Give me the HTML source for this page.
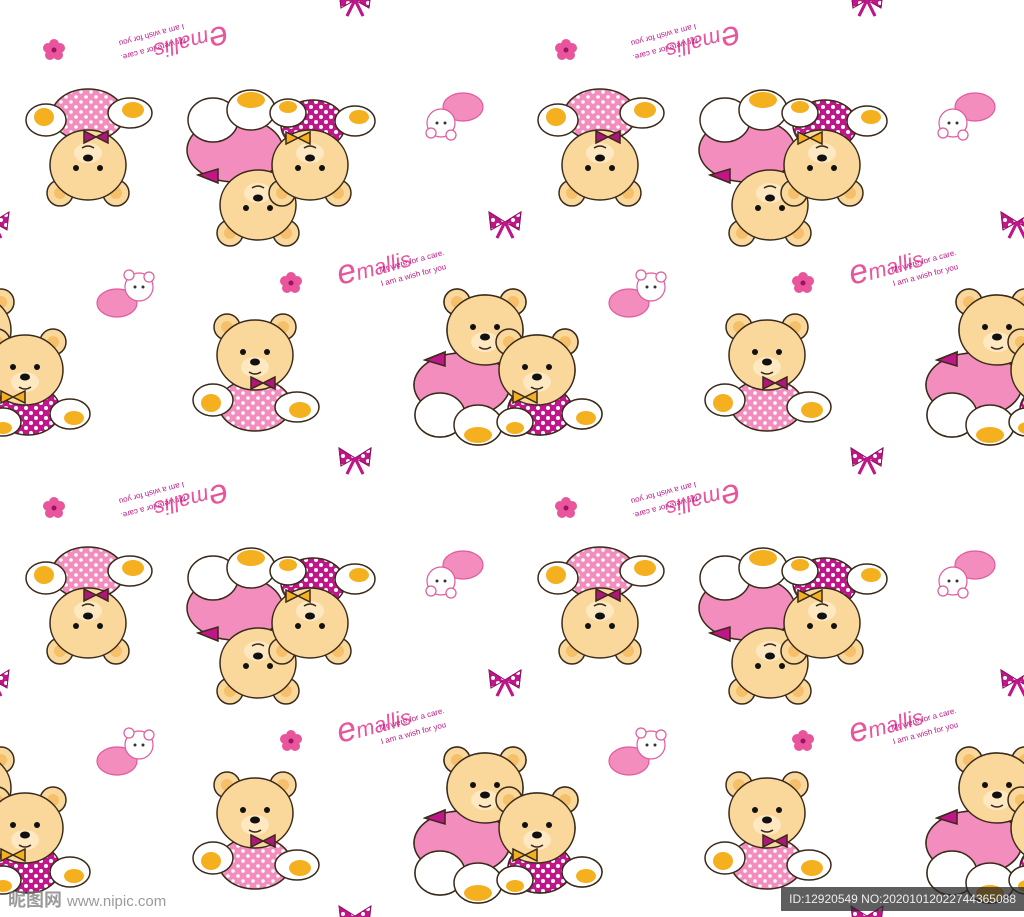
<!DOCTYPE html>
<html><head><meta charset="utf-8"><style>
html,body{margin:0;padding:0;background:#fff;width:1024px;height:917px;overflow:hidden;position:relative}
svg{position:absolute;left:0;top:0;overflow:hidden}
.wm{position:absolute;font-family:"Liberation Sans","Noto Sans CJK SC",sans-serif}
</style></head><body>
<svg width="1024" height="917" viewBox="0 0 1024 917" xmlns="http://www.w3.org/2000/svg">
<defs>
<pattern id="dots" width="10" height="10" patternUnits="userSpaceOnUse"><rect width="10" height="10" fill="#c0168a"/><circle cx="3" cy="3" r="2" fill="#fff"/><circle cx="8" cy="8" r="2" fill="#fff"/></pattern>
<pattern id="pdots" width="10" height="10" patternUnits="userSpaceOnUse"><rect width="10" height="10" fill="#f28dbe"/><circle cx="3" cy="3" r="1.8" fill="#fff"/><circle cx="8" cy="8" r="1.8" fill="#fff"/></pattern>
<g id="head" stroke="#3a2a1a" stroke-width="1.5">
 <circle cx="-28" cy="-28" r="13" fill="#fad89c"/><circle cx="28" cy="-28" r="13" fill="#fad89c"/>
 <circle cx="-28" cy="-28" r="6" fill="#f6c06a" stroke="none"/><circle cx="28" cy="-28" r="6" fill="#f6c06a" stroke="none"/>
 <ellipse cx="0" cy="0" rx="38" ry="35" fill="#fad89c"/>
 <ellipse cx="0" cy="12" rx="14" ry="10" fill="#fde8c2" stroke="none"/>
 <circle cx="-12" cy="-3" r="3" fill="#111" stroke="none"/><circle cx="12" cy="-3" r="3" fill="#111" stroke="none"/>
 <ellipse cx="0" cy="7" rx="5" ry="3.5" fill="#111" stroke="none"/>
 <path d="M-6 17 Q0 21 6 17" fill="none"/>
</g>
<g id="sb" stroke="#3a2a1a" stroke-width="1.5">
 <ellipse cx="0" cy="50" rx="36" ry="26" fill="url(#pdots)"/>
 <ellipse cx="-42" cy="45" rx="20" ry="16" fill="#fff"/><ellipse cx="-44" cy="48" rx="10" ry="9" fill="#f4b01e" stroke="none"/>
 <ellipse cx="42" cy="52" rx="22" ry="15" fill="#fff"/><ellipse cx="45" cy="55" rx="11" ry="8" fill="#f4b01e" stroke="none"/>
 <use href="#head"/>
 <path d="M8 28 l12 -6 v12 z M8 28 l-12 -6 v12 z" fill="#b0167a"/>
</g>
<g id="pair" stroke="#3a2a1a" stroke-width="1.5">
 <ellipse cx="462" cy="385" rx="48" ry="32" fill="#f28dbe"/>
 <path d="M425 360 l20 -8 v14 z" fill="#c0168a"/>
 <ellipse cx="440" cy="415" rx="25" ry="22" fill="#fff"/>
 <ellipse cx="478" cy="425" rx="24" ry="20" fill="#fff"/><ellipse cx="478" cy="435" rx="14" ry="8" fill="#f4b01e" stroke="none"/>
 <use href="#head" x="485" y="330"/>
 <ellipse cx="540" cy="410" rx="32" ry="25" fill="url(#dots)"/>
 <ellipse cx="515" cy="422" rx="18" ry="14" fill="#fff"/><ellipse cx="515" cy="428" rx="9" ry="6" fill="#f4b01e" stroke="none"/>
 <ellipse cx="582" cy="414" rx="20" ry="15" fill="#fff"/><ellipse cx="586" cy="418" rx="10" ry="7" fill="#f4b01e" stroke="none"/>
 <use href="#head" x="537" y="370"/>
 <path d="M525 397 l12 -6 v12 z M525 397 l-12 -6 v12 z" fill="#f4b01e"/>
</g>
<g id="pb" stroke="#e05a9c" stroke-width="1.2">
 <ellipse cx="-8" cy="8" rx="20" ry="14" fill="#f28dbe"/>
 <circle cx="14" cy="-8" r="14" fill="#fff"/><circle cx="4" cy="-20" r="5" fill="#fff"/><circle cx="24" cy="-18" r="5" fill="#fff"/>
 <circle cx="10" cy="-8" r="1.5" fill="#333" stroke="none"/><circle cx="18" cy="-8" r="1.5" fill="#333" stroke="none"/>
</g>
<g id="flower" fill="#e8559c"><circle cx="0" cy="-6" r="5"/><circle cx="6" cy="-2" r="5"/><circle cx="4" cy="5" r="5"/><circle cx="-4" cy="5" r="5"/><circle cx="-6" cy="-2" r="5"/><circle r="2.5" fill="#a0105e"/></g>
<g id="bow" fill="url(#dots)" stroke="#8a0f5a" stroke-width="1"><path d="M0 0 L-16 -10 L-14 8 Z M0 0 L16 -10 L14 8 Z"/><path d="M0 0 L-8 16 M0 0 L8 16" stroke="#c0168a" stroke-width="3"/></g>
<g id="txt" font-family="Liberation Sans,sans-serif" fill="#c0168a">
 <text x="0" y="0" font-size="34" font-style="italic" fill="#e8559c">e<tspan font-size="22">mallis</tspan></text>
 <text x="42" y="-2" font-size="8">Mr were for a care.</text>
 <text x="40" y="12" font-size="8">I am a wish for you</text>
</g>
<g id="tile">
 <use href="#flower" x="54" y="50"/><use href="#flower" x="291" y="283"/>
 <use href="#sb" transform="translate(88,165) scale(1,-1)"/>
 <use href="#pair" transform="translate(-227,535) scale(1,-1)"/>
 <use href="#pair" transform="translate(-512,0)"/>
 <use href="#pair"/>
 <use href="#sb" x="255" y="355"/>
 <use href="#pb" x="125" y="295"/>
 <use href="#pb" transform="translate(455,115) rotate(180)"/>
 <use href="#bow" x="505" y="222"/><use href="#bow" x="-7" y="222"/>
 <use href="#bow" x="355" y="458"/><use href="#bow" x="355" y="0"/>
 <use href="#txt" transform="translate(340,285) rotate(-15)"/>
 <use href="#txt" transform="translate(225,25) rotate(165)"/>
</g>
</defs>
<use href="#tile"/><use href="#tile" x="512"/>
<use href="#tile" y="458"/><use href="#tile" x="512" y="458"/>
<use href="#tile" y="-458"/><use href="#tile" x="512" y="-458"/>
<use href="#tile" x="1024"/><use href="#tile" x="1024" y="458"/>
</svg>
<div class="wm" style="left:8px;top:886px;font-size:18px;color:rgba(120,120,120,0.75);font-weight:bold">昵图网 <span style="font-size:15px;font-weight:normal">www.nipic.com</span></div>
<div class="wm" style="right:0;top:887px;background:rgba(40,40,40,0.75);color:#eee;font-size:12px;padding:3px 8px;height:18px;line-height:18px">ID:12920549 NO:20201012022744365088</div>
</body></html>
